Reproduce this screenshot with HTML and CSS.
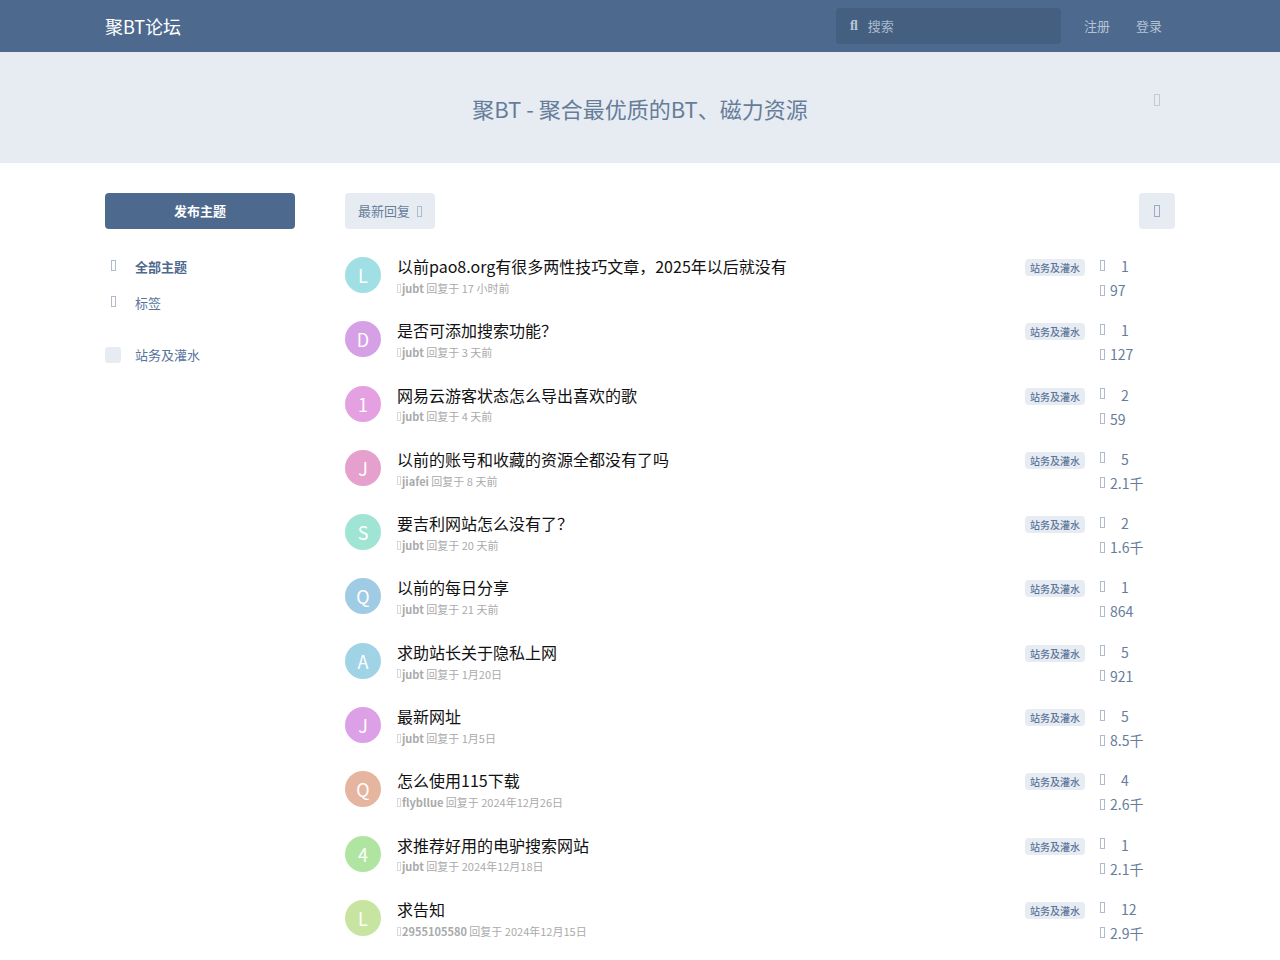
FILE: index.html
```html
<!DOCTYPE html>
<html lang="zh-Hans">
<head>
<meta charset="utf-8">
<meta name="viewport" content="width=device-width, initial-scale=1">
<title>聚BT论坛</title>
<link rel="stylesheet" href="styles.css">
</head>
<body>
<header class="header">
  <div class="container header-inner">
    <a class="brand" href="#">聚BT论坛</a>
    <div class="header-controls">
      <label class="search">
        <span class="search-icon" aria-hidden="true">ﬂ</span>
        <input class="search-input" type="search" placeholder="搜索" aria-label="搜索">
      </label>
      <div class="session">
        <button class="link-button" type="button">注册</button>
        <button class="link-button" type="button">登录</button>
      </div>
    </div>
  </div>
</header>

<section class="hero">
  <div class="container hero-inner">
    <h1 class="hero-title">聚BT - 聚合最优质的BT、磁力资源</h1>
    <button class="hero-close" type="button" aria-label="关闭"><i class="glyph glyph-light"></i></button>
  </div>
</section>

<main class="container layout">
  <aside class="sidebar">
    <button class="button button-primary" type="button">发布主题</button>
    <nav class="nav">
      <a class="nav-link nav-link-active" href="#"><span class="nav-icon"><i class="glyph"></i></span>全部主题</a>
      <a class="nav-link" href="#"><span class="nav-icon"><i class="glyph"></i></span>标签</a>
      <a class="nav-link nav-link-tag" href="#"><span class="tag-square"></span>站务及灌水</a>
    </nav>
  </aside>

  <div class="content">
    <div class="toolbar">
      <button class="button" type="button">最新回复<i class="glyph"></i></button>
      <button class="button button-icon" type="button" aria-label="刷新"><i class="glyph glyph-wide"></i></button>
    </div>
    <ul class="discussions" id="discussions"></ul>
  </div>
</main>
<script src="app.js"></script>
</body>
</html>
```

FILE: styles.css
```css
* {
  box-sizing: border-box;
}

body {
  margin: 0;
  background: #fff;
  color: #426799;
  font: 13px/1.5 "Noto Sans CJK SC", sans-serif;
  text-rendering: optimizeSpeed;
}

a {
  color: inherit;
  text-decoration: none;
}

button,
input {
  font: inherit;
  color: inherit;
}

button {
  border: 0;
  background: none;
  cursor: pointer;
}

.container {
  max-width: 1100px;
  margin: 0 auto;
  padding: 0 15px;
}

/* Empty outline used as the icon placeholder */
.glyph {
  display: block;
  flex: none;
  width: 5px;
  height: 11px;
  border: 1px solid #afbccf;
}

.glyph-wide {
  width: 6px;
  height: 12px;
  border-color: #9aabc3;
}

.glyph-light {
  width: 6px;
  height: 12px;
  border-color: #c3cad4;
}

.header {
  background: #4d698e;
}

.header-inner,
.header-controls,
.session {
  display: flex;
  align-items: center;
}

.header-inner {
  justify-content: space-between;
  height: 52px;
}

.header-controls {
  gap: 10px;
}

.brand {
  color: #fff;
  font-size: 18px;
}

.search {
  display: flex;
  align-items: center;
  gap: 10px;
  width: 225px;
  height: 36px;
  padding: 0 14px;
  border-radius: 4px;
  background: #455f80;
  color: #b8c6d9;
}

.search-icon {
  font: bold 14px/20px "Liberation Serif", serif;
}

.search-input {
  flex: 1;
  min-width: 0;
  padding: 0;
  border: 0;
  outline: 0;
  background: none;
}

.search-input::placeholder {
  color: #aabbd0;
}

.link-button {
  height: 36px;
  padding: 0 13px;
  color: #b5c3d6;
}

.hero {
  background: #e7ecf3;
  color: #667d99;
}

.hero-inner {
  position: relative;
  padding-top: 40px;
  padding-bottom: 38px;
  text-align: center;
}

.hero-title {
  margin: 0;
  font-size: 22px;
  font-weight: 400;
}

.hero-close {
  position: absolute;
  top: 30px;
  right: 15px;
  display: grid;
  place-items: center;
  width: 36px;
  height: 36px;
  padding: 0;
}

.layout {
  display: flex;
  gap: 50px;
  margin-top: 30px;
}

.sidebar {
  flex: none;
  width: 190px;
}

.content {
  flex: 1;
  min-width: 0;
}

.button {
  display: flex;
  align-items: center;
  justify-content: center;
  gap: 7px;
  height: 36px;
  padding: 0 13px;
  border-radius: 4px;
  background: #e7ecf3;
  color: #667d99;
}

.button-primary {
  width: 100%;
  background: #4d698e;
  color: #fff;
  font-weight: 700;
}

.button-icon {
  width: 36px;
  padding: 0;
}

.nav {
  margin-top: 20px;
}

.nav-link {
  display: flex;
  align-items: center;
  gap: 14px;
  height: 36px;
  color: #58749b;
}

.nav-link-active {
  color: #4d698e;
  font-weight: 700;
}

.nav-link-tag {
  margin-top: 16px;
}

.nav-icon {
  display: flex;
  justify-content: center;
  width: 16px;
  height: 14px;
}

.tag-square {
  width: 16px;
  height: 16px;
  border-radius: 3px;
  background: #e7ecf3;
}

.toolbar {
  display: flex;
  justify-content: space-between;
}

.discussions {
  margin: 15px 0 0;
  padding: 0;
  list-style: none;
}

.discussion {
  display: flex;
  align-items: flex-start;
  padding: 12px 0;
}

.avatar {
  flex: none;
  width: 36px;
  height: 36px;
  margin: 1px 16px 0 0;
  border-radius: 50%;
  color: #fff;
  font-size: 18px;
  line-height: 36px;
  text-align: center;
}

.summary {
  flex: 1;
  min-width: 0;
}

.title {
  margin: 0 0 3px;
  color: #111;
  font-size: 16px;
  font-weight: 400;
  line-height: 1.3;
}

.meta {
  display: flex;
  align-items: center;
  color: #aaa;
  font-size: 11px;
  white-space: pre;
}

.meta .glyph {
  width: 4px;
  height: 9px;
  margin-right: 1px;
  border-color: #d8d8d8;
}

.tag {
  margin: 3px 15px 0 0;
  padding: 0 5px;
  border-radius: 4px;
  background: #e7ecf3;
  color: #5b7599;
  font-size: 10px;
  font-weight: 500;
  line-height: 17px;
}

.stats {
  display: grid;
  flex: none;
  width: 75px;
  height: 36px;
  color: #667d99;
  font-size: 14px;
  line-height: 24px;
}

.stat {
  display: flex;
  align-items: center;
  gap: 5px;
  height: 24px;
}

.stat-replies {
  gap: 16px;
  margin-top: -2px;
}

.stat-replies .glyph {
  margin-bottom: 2px;
}
```

FILE: app.js
```js
const discussions = [
  ["L", "#a0dfe3", "以前pao8.org有很多两性技巧文章，2025年以后就没有", "jubt", "17 小时前", "1", "97"],
  ["D", "#d5a0e6", "是否可添加搜索功能？", "jubt", "3 天前", "1", "127"],
  ["1", "#e4a0e0", "网易云游客状态怎么导出喜欢的歌", "jubt", "4 天前", "2", "59"],
  ["J", "#e5a0cd", "以前的账号和收藏的资源全都没有了吗", "jiafei", "8 天前", "5", "2.1千"],
  ["S", "#a0e5d4", "要吉利网站怎么没有了？", "jubt", "20 天前", "2", "1.6千"],
  ["Q", "#a0cbe5", "以前的每日分享", "jubt", "21 天前", "1", "864"],
  ["A", "#a0d3e5", "求助站长关于隐私上网", "jubt", "1月20日", "5", "921"],
  ["J", "#dba0e5", "最新网址", "jubt", "1月5日", "5", "8.5千"],
  ["Q", "#e5b5a0", "怎么使用115下载", "flybllue", "2024年12月26日", "4", "2.6千"],
  ["4", "#afe5a0", "求推荐好用的电驴搜索网站", "jubt", "2024年12月18日", "1", "2.1千"],
  ["L", "#c7e5a0", "求告知", "2955105580", "2024年12月15日", "12", "2.9千"]
];

document.getElementById("discussions").innerHTML = discussions.map(
  ([letter, color, title, user, time, replies, views]) => `
  <li class="discussion">
    <span class="avatar" style="background:${color}">${letter}</span>
    <a class="summary" href="#">
      <h2 class="title">${title}</h2>
      <div class="meta"><i class="glyph"></i><strong>${user}</strong> 回复于 ${time}</div>
    </a>
    <span class="tag">站务及灌水</span>
    <div class="stats">
      <span class="stat stat-replies"><i class="glyph"></i>${replies}</span>
      <span class="stat"><i class="glyph"></i>${views}</span>
    </div>
  </li>`
).join("");
```
